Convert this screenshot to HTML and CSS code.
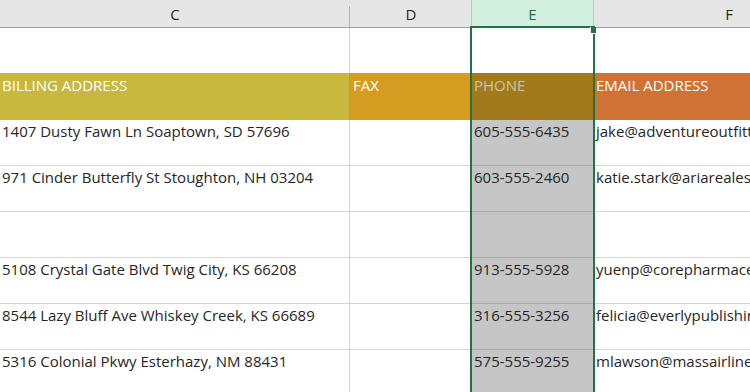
FILE: index.html
```html
<!DOCTYPE html>
<html lang="en">
<head>
  <meta charset="UTF-8" />
  <title>Customers</title>
  <link rel="stylesheet" href="styles.css">
</head>
<body>
<div class="sheet">
  <div class="cols">
    <div class="col">C</div>
    <div class="col">D</div>
    <div class="col col-sel">E</div>
    <div class="col">F</div>
  </div>

  <div class="row row-blank">
    <div class="cell"></div>
    <div class="cell"></div>
    <div class="cell active"></div>
    <div class="cell"></div>
  </div>

  <div class="row row-head">
    <div class="cell h-bill">BILLING ADDRESS</div>
    <div class="cell h-fax">FAX</div>
    <div class="cell h-phone">PHONE</div>
    <div class="cell h-email">EMAIL ADDRESS</div>
  </div>

  <div class="row">
    <div class="cell">1407 Dusty Fawn Ln Soaptown, SD 57696</div>
    <div class="cell"></div>
    <div class="cell sel">605-555-6435</div>
    <div class="cell">jake@adventureoutfitters.com</div>
  </div>
  <div class="row">
    <div class="cell">971 Cinder Butterfly St Stoughton, NH 03204</div>
    <div class="cell"></div>
    <div class="cell sel">603-555-2460</div>
    <div class="cell">katie.stark@ariarealestate.com</div>
  </div>
  <div class="row">
    <div class="cell"></div>
    <div class="cell"></div>
    <div class="cell sel"></div>
    <div class="cell"></div>
  </div>
  <div class="row">
    <div class="cell">5108 Crystal Gate Blvd Twig City, KS 66208</div>
    <div class="cell"></div>
    <div class="cell sel">913-555-5928</div>
    <div class="cell">yuenp@corepharmaceuticals.com</div>
  </div>
  <div class="row">
    <div class="cell">8544 Lazy Bluff Ave Whiskey Creek, KS 66689</div>
    <div class="cell"></div>
    <div class="cell sel">316-555-3256</div>
    <div class="cell">felicia@everlypublishing.com</div>
  </div>
  <div class="row">
    <div class="cell">5316 Colonial Pkwy Esterhazy, NM 88431</div>
    <div class="cell"></div>
    <div class="cell sel">575-555-9255</div>
    <div class="cell">mlawson@massairlines.com</div>
  </div>

  <div class="selection"><span class="handle"></span></div>
</div>
</body>
</html>
```

FILE: styles.css
```css
* {
  margin: 0;
  padding: 0;
  box-sizing: border-box;
}

body {
  font-family: 'Open Sans', sans-serif;
  background: #fff;
  color: #262626;
}

.sheet {
  position: relative;
  width: 750px;
  height: 392px;
  overflow: hidden;
}

.cols,
.row {
  display: grid;
  grid-template-columns: 350px 122px 122px 270px;
}

/* column letters */
.cols {
  height: 28px;
  background: #e6e6e6;
  border-bottom: 1px solid #9e9e9e;
}

.col {
  text-align: center;
  font-size: 15px;
  line-height: 23px;
  padding-top: 3px;
  background: linear-gradient(#b4b4b4, #b4b4b4) right 6px / 1px 21px no-repeat;
}

.col-sel {
  background: #d3efe0;
  border-left: 1px solid #c4c4c4;
  border-right: 1px solid #c4c4c4;
  color: #1d6b40;
  margin-left: -1px;
}

/* cells */
.row {
  height: 46px;
}

.cell {
  font-size: 15px;
  line-height: 20px;
  padding: 1px 3px 0 2px;
  white-space: nowrap;
  overflow: hidden;
  border-right: 1px solid #d4d4d4;
  border-bottom: 1px solid #d4d4d4;
}

.row-blank {
  height: 45px;
}

.row-blank .cell {
  border-bottom: none;
}

.cell.sel {
  background: #c6c6c6;
  border-bottom-color: #a9a9a9;
}

/* coloured title row */
.row-head {
  height: 47px;
}

.row-head .cell {
  color: #fff;
  padding-top: 2px;
  border-bottom: none;
}

.h-bill {
  background: #c8b83e;
  border-right-color: #d49d22 !important;
}

.h-fax {
  background: #d49d22;
  padding-left: 3px !important;
}

.h-phone {
  background: #a27a1c;
  color: #cbc4aa !important;
  border-right-color: #fff !important;
}

.h-email {
  background: #cf7236;
}

/* active column outline */
.selection {
  position: absolute;
  left: 470px;
  top: 26px;
  width: 125px;
  height: 380px;
  border: 2px solid #217346;
  border-bottom: none;
}

.handle {
  position: absolute;
  right: -3px;
  top: -1px;
  width: 6px;
  height: 7px;
  background: #217346;
  border-bottom: 1px solid #fff;
  border-left: 1px solid #fff;
}
```
